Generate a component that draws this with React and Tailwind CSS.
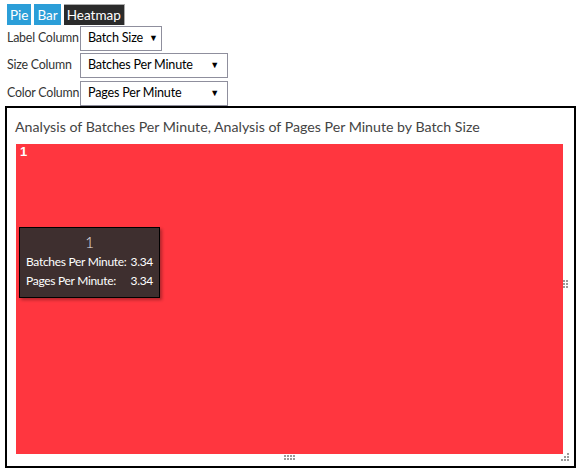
import { useState } from 'react';

const FONT = { fontFamily: '"Segoe UI", Lato, "Noto Sans", sans-serif' };

function Dots({ cols, rows }) {
  return (
    <div className="grid gap-[1px]" style={{ gridTemplateColumns: `repeat(${cols}, 2px)` }}>
      {Array.from({ length: cols * rows }).map((_, i) => (
        <span key={i} className="w-[2px] h-[2px] bg-[#9a9a9a]" />
      ))}
    </div>
  );
}

function Select({ value, width }) {
  return (
    <div
      className="shrink-0 h-[25px] border border-[#8f8f9d] bg-white flex items-center justify-between gap-[6px] pl-[7px] pr-[8px] text-[12.6px] text-black whitespace-nowrap"
      style={{ width }}
    >
      <span>{value}</span>
      <span className="text-[9px]">▼</span>
    </div>
  );
}

export default function App() {
  const [mode, setMode] = useState('Heatmap');
  const tabs = ['Pie', 'Bar', 'Heatmap'];

  return (
    <div className="w-[577px] h-[469px] bg-white relative" style={FONT}>
      <div className="flex gap-[3px] pl-[7px] pt-[4px]">
        {tabs.map(t => (
          <button
            key={t}
            onClick={() => setMode(t)}
            className={`h-[21px] px-[3px] text-[13.5px] leading-[20px] text-white ${
              mode === t ? 'bg-[#2b2b2b] border-t border-r border-[#aaa]' : 'bg-[#2b9ed8]'
            }`}
          >
            {t}
          </button>
        ))}
      </div>

      <div className="flex flex-col pl-[7px] text-[12.4px] tracking-[-0.2px] text-[#333]">
        <div className="flex items-center h-[26px]">
          <span className="w-[73px] shrink-0 whitespace-nowrap">Label Column</span>
          <Select value="Batch Size" width={82} />
        </div>
        <div className="flex items-center h-[26px] mt-[1px]">
          <span className="w-[73px] shrink-0 whitespace-nowrap">Size Column</span>
          <Select value="Batches Per Minute" width={148} />
        </div>
        <div className="flex items-center h-[26px] mt-[2px]">
          <span className="w-[73px] shrink-0 whitespace-nowrap">Color Column</span>
          <Select value="Pages Per Minute" width={148} />
        </div>
      </div>

      <div className="absolute left-[5px] top-[106px] w-[571px] h-[362px] border-2 border-black">
        <div className="pl-[8px] pt-[9px] text-[14.2px] text-[#444] leading-[20px] whitespace-nowrap">
          Analysis of Batches Per Minute, Analysis of Pages Per Minute by Batch Size
        </div>
        <div className="ml-[9px] mt-[7px] w-[547px] h-[310px] bg-[#ff363f] relative">
          <span className="absolute left-[4px] top-[1px] text-white font-bold text-[13px] leading-[14px]" style={{ fontFamily: 'Arial, "Liberation Sans", sans-serif' }}>1</span>
          <div className="absolute left-[3px] top-[83px] w-[141px] h-[71px] bg-[#3e2f2f] border border-black shadow-[2px_2px_3px_rgba(0,0,0,0.3)] text-white px-[6px] pt-[5px]">
            <div className="text-center text-[15px] leading-[18px] text-[#e6e6e6] font-light">1</div>
            <div className="flex text-[12px] leading-[19px] mt-[1px] tracking-[-0.3px] whitespace-nowrap">
              <span className="w-[106px]">Batches Per Minute:</span>
              <span>3.34</span>
            </div>
            <div className="flex text-[12px] leading-[19px] tracking-[-0.3px] whitespace-nowrap">
              <span className="w-[106px]">Pages Per Minute:</span>
              <span>3.34</span>
            </div>
          </div>
        </div>
        <div className="absolute right-[6px] top-[172px]">
          <Dots cols={2} rows={3} />
        </div>
        <div className="absolute left-[277px] bottom-[6px]">
          <Dots cols={4} rows={2} />
        </div>
        <div className="absolute right-[5px] bottom-[5px] flex flex-col items-end gap-[1px]">
          <span className="w-[2px] h-[2px] bg-[#9a9a9a]" />
          <span className="w-[5px] h-[2px] flex gap-[1px]"><span className="w-[2px] h-[2px] bg-[#9a9a9a]" /><span className="w-[2px] h-[2px] bg-[#9a9a9a]" /></span>
          <span className="w-[8px] h-[2px] flex gap-[1px]"><span className="w-[2px] h-[2px] bg-[#9a9a9a]" /><span className="w-[2px] h-[2px] bg-[#9a9a9a]" /><span className="w-[2px] h-[2px] bg-[#9a9a9a]" /></span>
        </div>
      </div>
    </div>
  );
}
